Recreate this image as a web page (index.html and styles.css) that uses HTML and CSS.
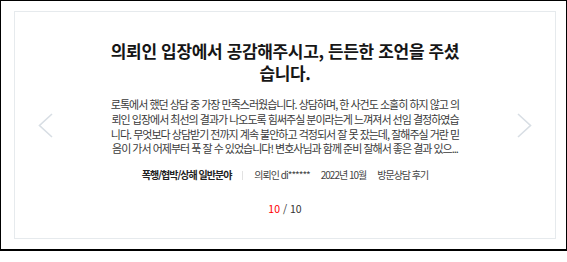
FILE: index.html
```html
<!DOCTYPE html>
<html lang="ko">
<head>
    <meta charset="UTF-8">
    <title>상담 후기</title>
    <link rel="stylesheet" href="styles.css">
</head>
<body>
<div class="frame">
    <section class="review-card">
        <button class="nav prev" aria-label="이전">
            <svg width="15" height="25" viewBox="0 0 15 25"><polyline points="14,1 1.5,12.5 14,24"/></svg>
        </button>

        <div class="review">
            <h2 class="review-title">의뢰인 입장에서 공감해주시고, 든든한 조언을 주셨습니다.</h2>
            <p class="review-text">로톡에서 했던 상담 중 가장 만족스러웠습니다. 상담하며, 한 사건도 소홀히 하지 않고 의뢰인 입장에서 최선의 결과가 나오도록 힘써주실 분이라는게 느껴져서 선임 결정하였습니다. 무엇보다 상담받기 전까지 계속 불안하고 걱정되서 잘 못 잤는데, 잘해주실 거란 믿음이 가서 어제부터 푹 잘 수 있었습니다! 변호사님과 함께 준비 잘해서 좋은 결과 있으...</p>
            <ul class="review-meta">
                <li class="field">폭행/협박/상해 일반분야</li>
                <li class="sep"></li>
                <li>의뢰인 di******</li>
                <li>2022년 10월</li>
                <li>방문상담 후기</li>
            </ul>
            <div class="pager"><span class="current">10</span> / 10</div>
        </div>

        <button class="nav next" aria-label="다음">
            <svg width="15" height="25" viewBox="0 0 15 25"><polyline points="1,1 13.5,12.5 1,24"/></svg>
        </button>
    </section>
</div>
</body>
</html>
```

FILE: styles.css
```css
body {
    margin: 0;
    background: #fff;
    font-family: "Noto Sans CJK KR", "Noto Sans", sans-serif;
}

/* 캡처 프레임 */
.frame {
    width: 552px;
    height: 238px;
    padding: 10px 0 0 13px;
    border: 1px solid #000;
    border-right-width: 2px;
    border-bottom-width: 2px;
    box-shadow: 5px 5px 4px rgba(0, 0, 0, 0.45);
    overflow: hidden;
    box-sizing: content-box;
}

.review-card {
    width: 542px;
    height: 228px;
    box-sizing: border-box;
    border: 1px solid #e6eaed;
    padding: 28px 23px 0;
    display: flex;
    align-items: flex-start;
}

.nav {
    align-self: center;
    margin-top: -28px;
    padding: 0;
    border: none;
    background: none;
    width: 15px;
    height: 25px;
    cursor: pointer;
}

.nav svg {
    display: block;
    fill: none;
    stroke: #d8dee4;
    stroke-width: 1.6;
}

.review {
    width: 354px;
    margin: 0 auto;
    text-align: center;
}

.review-title {
    margin: 0;
    font-size: 17px;
    line-height: 22px;
    font-weight: 700;
    letter-spacing: -0.35px;
    color: #161616;
}

.review-text {
    margin: 13px 0 0;
    font-size: 11px;
    line-height: 14.8px;
    letter-spacing: -1px;
    color: #3a3a3a;
}

.review-meta {
    list-style: none;
    margin: 12px 0 0;
    padding: 0;
    display: flex;
    justify-content: center;
    align-items: center;
    gap: 11px;
    font-size: 10px;
    line-height: 14px;
    letter-spacing: -1px;
    color: #444;
}

.review-meta .field {
    font-weight: 700;
    color: #222;
}

.review-meta .sep {
    width: 1px;
    height: 9px;
    background: #e2e2e2;
}

.pager {
    margin-top: 20px;
    font-size: 10.5px;
    line-height: 14px;
    color: #333;
}

.pager .current {
    color: #f00;
}
```
